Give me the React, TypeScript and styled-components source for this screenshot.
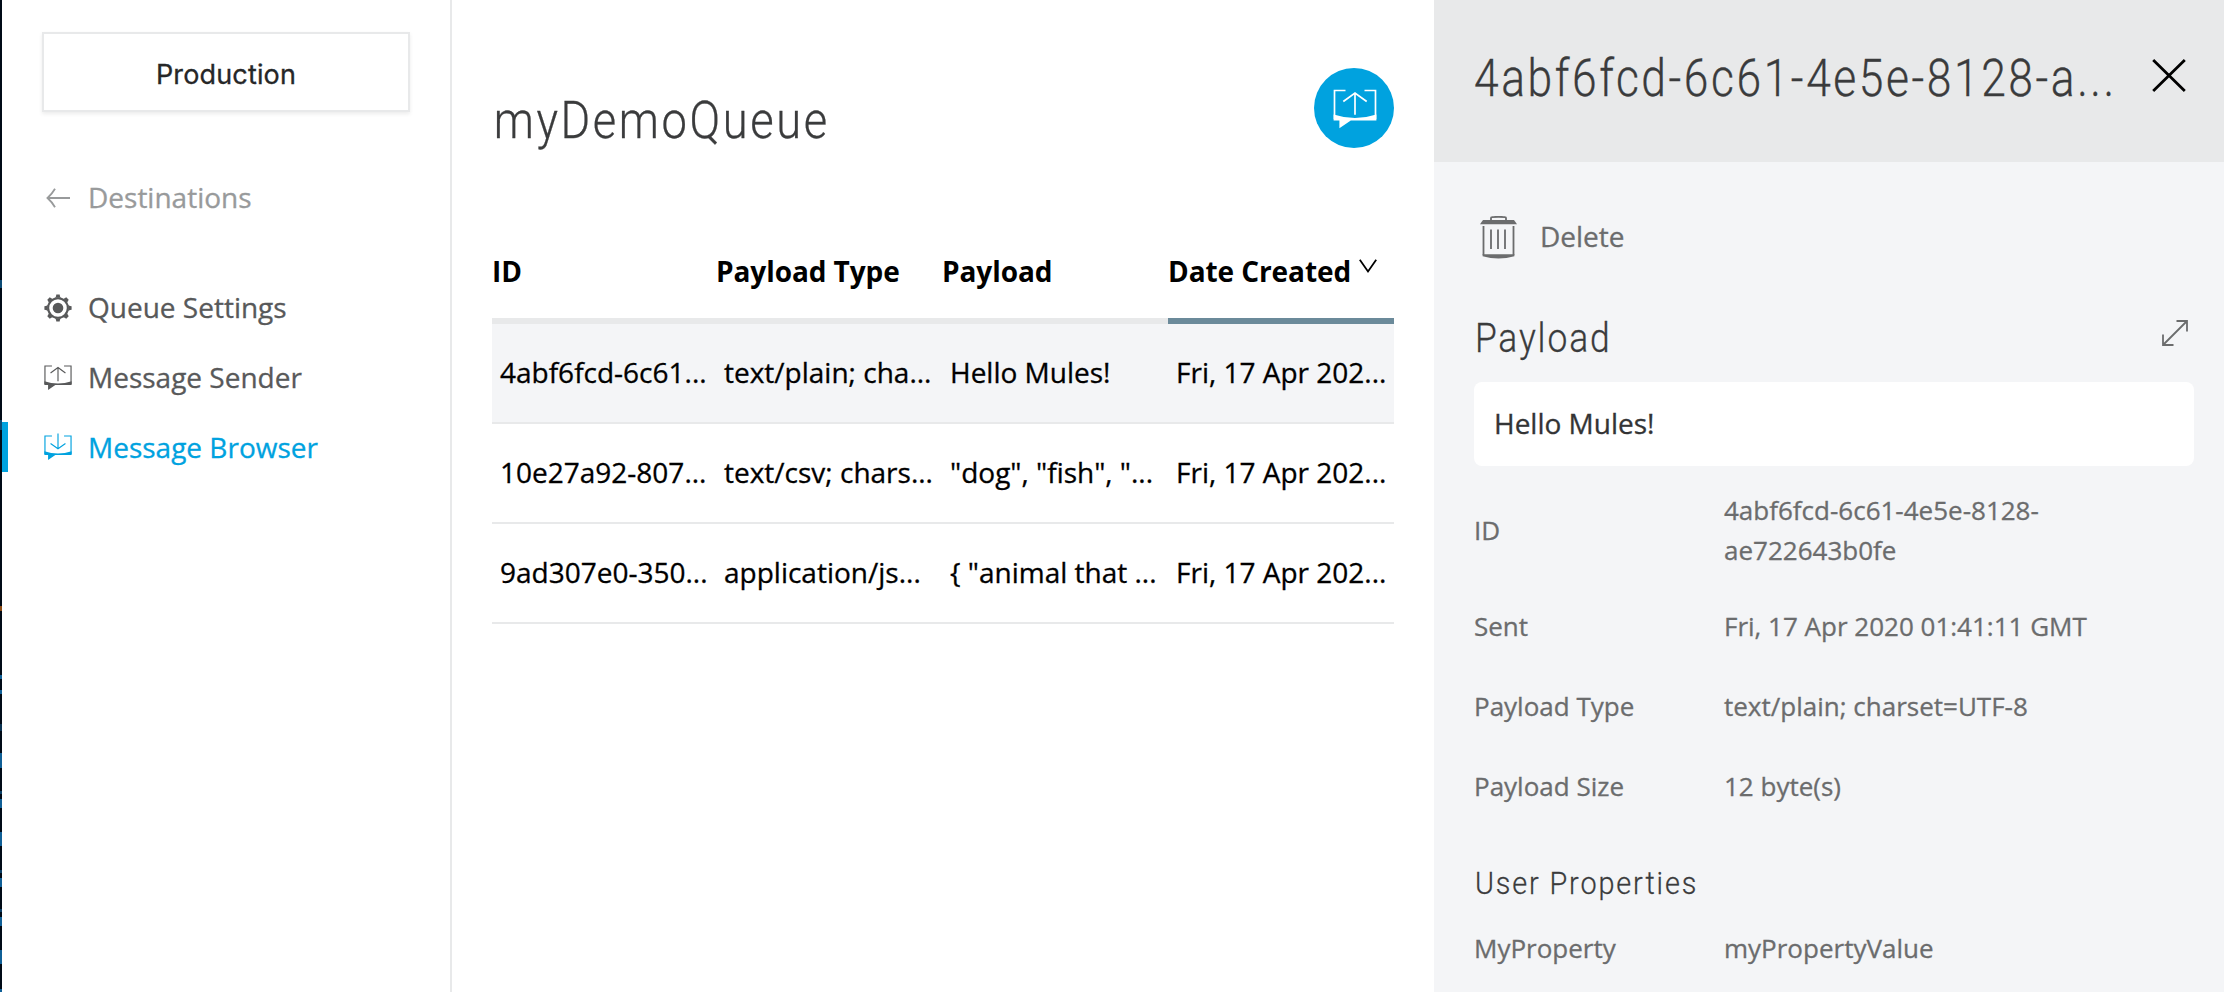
import React from "react";
import styled, { createGlobalStyle } from "styled-components";

const color = {
  blue: "#00a2df",
  line: "#e8e9ea",
  panel: "#f4f5f7",
  text: "#58595a",
  muted: "#989a9b",
  detail: "#6b6c6d",
  heading: "#3a3b3c",
};

const body = `"Open Sans", "Noto Sans", sans-serif`;
const display = `Roboto, "Open Sans", sans-serif`;

const GlobalStyle = createGlobalStyle`
  * { box-sizing: border-box; }
  body {
    margin: 0;
    background: #fff;
    font-family: ${body};
    overflow: hidden;
    -webkit-text-stroke: 0.3px currentColor;
  }
  h1, h2, h3, p, dl, dd, dt { margin: 0; font-weight: inherit; }
  button { font: inherit; border: 0; background: none; padding: 0; color: inherit; }
`;

const Page = styled.div`
  display: flex;
  width: 2224px;
  height: 992px;
  overflow: hidden;
`;

const edgeMarks: [number, number, string][] = [
  [280, 8, "#0b4a75"],
  [420, 10, "#0b4a75"],
  [606, 5, "#8a4a14"],
  [675, 4, "#0f5f96"],
  [690, 4, "#0f5f96"],
  [724, 7, "#0a3352"],
  [753, 15, "#0f5f96"],
  [791, 3, "#0a3f66"],
  [799, 9, "#0f5f96"],
  [832, 14, "#0f5f96"],
  [870, 3, "#0a3f66"],
  [878, 9, "#0f5f96"],
  [909, 3, "#0a3f66"],
  [917, 9, "#0f5f96"],
  [950, 14, "#0f5f96"],
  [989, 3, "#0f5f96"],
];

const edgeStops = edgeMarks
  .map(([y, h, c]) => `#000a16 ${y}px, ${c} ${y}px, ${c} ${y + h}px, #000a16 ${y + h}px`)
  .join(", ");

const Edge = styled.div`
  flex: 0 0 2px;
  background: linear-gradient(to bottom, ${edgeStops});
`;

const Sidebar = styled.aside`
  flex: 0 0 450px;
  border-right: 2px solid ${color.line};
  padding-top: 32px;
`;

const Environment = styled.button`
  display: flex;
  align-items: center;
  justify-content: center;
  width: 368px;
  height: 80px;
  margin: 0 0 60px 40px;
  background: #fff;
  border: 2px solid ${color.line};
  box-shadow: 0 2px 4px rgba(0, 0, 0, 0.08);
  font-family: Inter, "Liberation Sans", sans-serif;
  font-size: 27px;
  letter-spacing: 0.15px;
  color: #262728;
  padding-top: 5px;
`;

const Nav = styled.nav`
  display: flex;
  flex-direction: column;
  gap: 20px;
`;

const NavItem = styled.a<{ $tone?: "muted" | "active" }>`
  display: flex;
  align-items: center;
  gap: 15px;
  height: 50px;
  padding-left: ${(p) => (p.$tone === "active" ? 35 : 41)}px;
  border-left: ${(p) => (p.$tone === "active" ? `6px solid ${color.blue}` : "0")};
  margin-bottom: ${(p) => (p.$tone === "muted" ? 40 : 0)}px;
  font-size: 28px;
  line-height: 50px;
  color: ${(p) =>
    p.$tone === "active" ? color.blue : p.$tone === "muted" ? color.muted : color.text};
`;

const NavIcon = styled.span`
  display: flex;
  align-items: center;
  justify-content: center;
  width: 30px;
  height: 30px;
  padding-top: 1px;
`;

const Main = styled.main`
  flex: 1;
  padding: 68px 40px 0;
`;

const MainHeader = styled.header`
  display: flex;
  justify-content: space-between;
  align-items: flex-start;
  height: 156px;
`;

const QueueTitle = styled.h1`
  padding: 23px 0 0 2px;
  font-family: ${display};
  font-weight: 300;
  font-size: 52px;
  line-height: 60px;
  letter-spacing: 3px;
  transform: scaleX(0.87);
  transform-origin: left;
  color: ${color.heading};
`;

const SendButton = styled.button`
  display: flex;
  justify-content: center;
  padding: 21px 0 0 2px;
  width: 80px;
  height: 80px;
  border-radius: 50%;
  background: ${color.blue};
  color: #fff;
`;

const Table = styled.div`
  display: grid;
  width: 902px;
`;

const Row = styled.div<{ $selected?: boolean }>`
  display: grid;
  grid-template-columns: 224px 226px 226px 226px;
  height: 100px;
  border-bottom: 2px solid ${color.line};
  background: ${(p) => (p.$selected ? color.panel : "#fff")};
`;

const HeadRow = styled(Row)`
  border-bottom: 0;
`;

const HeadCell = styled.div<{ $sorted?: boolean }>`
  display: flex;
  gap: 8px;
  padding-top: 27px;
  border-bottom: 6px solid ${(p) => (p.$sorted ? "#6b8a9a" : color.line)};
  font-weight: 700;
  font-size: 28px;
  line-height: 40px;
  letter-spacing: -0.08px;
  -webkit-text-stroke: 0;
  white-space: nowrap;
  color: #000;
`;

const Cell = styled.div`
  padding: 0 4px 0 8px;
  overflow: hidden;
  text-overflow: ellipsis;
  white-space: nowrap;
  font-size: 28px;
  line-height: 97px;
  color: #000;
`;

const SortIcon = styled.svg`
  margin-top: 8px;
`;

const Panel = styled.aside`
  flex: 0 0 790px;
  background: ${color.panel};
`;

const PanelHeader = styled.header`
  display: flex;
  justify-content: space-between;
  align-items: flex-start;
  height: 162px;
  padding: 49px 38px 0 40px;
  background: ${color.line};
`;

const PanelTitle = styled.h2`
  width: 645px;
  font-family: ${display};
  font-weight: 300;
  font-size: 51px;
  line-height: 60px;
  letter-spacing: 2.95px;
  transform: scaleX(0.87);
  transform-origin: left;
  white-space: nowrap;
  color: ${color.heading};
`;

const CloseButton = styled.button`
  display: flex;
  padding-top: 10px;
  color: #000;
`;

const PanelBody = styled.div`
  padding: 0 30px 0 40px;
`;

const DeleteButton = styled.button`
  display: flex;
  align-items: flex-start;
  gap: 23px;
  height: 152px;
  padding: 54px 0 0 6px;
  font-size: 28px;
  line-height: 41px;
  color: ${color.detail};
`;

const SectionHeader = styled.div`
  display: flex;
  justify-content: space-between;
  height: 68px;
  padding-right: 6px;
`;

const SectionTitle = styled.h3<{ $small?: boolean }>`
  padding-left: 1px;
  font-family: ${display};
  font-weight: 300;
  font-size: ${(p) => (p.$small ? 32 : 40)}px;
  line-height: 48px;
  letter-spacing: 2.1px;
  margin-top: ${(p) => (p.$small ? 33 : 1)}px;
  transform: scaleX(${(p) => (p.$small ? 0.9 : 0.885)});
  transform-origin: left;
  color: ${color.heading};
`;

const ExpandButton = styled.button`
  align-self: flex-start;
  display: flex;
  padding-top: 6px;
  color: ${color.detail};
`;

const PayloadBox = styled.pre`
  margin: 0 0 8px;
  height: 84px;
  padding-left: 20px;
  border-radius: 8px;
  background: #fff;
  font-family: ${body};
  font-size: 28px;
  line-height: 83px;
  color: #333435;
`;

const Detail = styled.dl<{ $tall?: boolean }>`
  display: grid;
  grid-template-columns: 250px 380px;
  align-items: center;
  height: ${(p) => (p.$tall ? 112 : 80)}px;
  font-size: 26px;
  line-height: 40px;
  color: ${color.detail};
`;

const PropertyList = styled.div`
  margin-top: 1px;
`;

function MessageIcon({ width, down, weight = 1.8 }: { width: number; down?: boolean; weight?: number }) {
  return (
    <svg width={width} height={(width * 40) / 44} viewBox="0 0 44 40" fill="none" stroke="currentColor" strokeWidth={weight} overflow="visible">
      <path d="M12.5 1.5H1.5V30M31.5 1.5H42.5V30" />
      <path
        d="M.6 25.5Q22 32.5 43.4 25.5V31.4H17.8L6.4 39.2V31.4H.6Z"
        fill="currentColor"
        stroke="none"
      />
      {down ? <path d="M22-2.5V21M10.3 13.5 22 21.6 33.7 13.5" /> : <path d="M22 4V25.7M10.3 12.5 22 4 33.7 12.5" />}
    </svg>
  );
}

function GearIcon() {
  const teeth = [0, 45, 90, 135, 180, 225, 270, 315];
  return (
    <svg width="28" height="28" viewBox="-14 -14 28 28" fill="currentColor">
      <circle r="9.8" fill="none" stroke="currentColor" strokeWidth="2" />
      <circle r="5.3" />
      {teeth.map((a) => (
        <path
          key={a}
          transform={`rotate(${a})`}
          d={a % 90 === 0 ? "M-3.4-10.2C-2-11-2-11.5-1.7-13.6H1.7C2-11.5 2-11 3.4-10.2Z" : "M-2.6-10.2-1.7-13.4H1.7L2.6-10.2Z"}
        />
      ))}
    </svg>
  );
}

function BackIcon() {
  return (
    <svg width="24" height="20" viewBox="0 0 24 20" fill="none" stroke="currentColor" strokeWidth="1.8">
      <path d="M24 10H1.5M9 .8Q6 6 1.5 10 6 14 9 19.2" />
    </svg>
  );
}

function TrashIcon() {
  return (
    <svg width="37" height="43" viewBox="0 0 37 43" fill="none" stroke="currentColor" strokeWidth="1.8">
      <path d="M11 4.5V2Q11 1.3 12 1.2 18.5.4 25 1.2 26 1.3 26 2V4.5" />
      <path d="M3 4H34L37 8.2H0Z" fill="currentColor" stroke="none" />
      <path d="M3.5 10V39M33.5 10V39" />
      <path d="M2.6 38.3H34.4V40.2Q18.5 44.8 2.6 40.2Z" fill="currentColor" stroke="none" />
      <path d="M11 13.5V33M18 13.5V33M25 13.5V33" />
    </svg>
  );
}

const messages = [
  ["4abf6fcd-6c61...", "text/plain; cha...", "Hello Mules!", "Fri, 17 Apr 202..."],
  ["10e27a92-807...", "text/csv; chars...", '"dog", "fish", "...', "Fri, 17 Apr 202..."],
  ["9ad307e0-350...", "application/js...", '{ "animal that ...', "Fri, 17 Apr 202..."],
];

const details = [
  ["ID", "4abf6fcd-6c61-4e5e-8128-ae722643b0fe"],
  ["Sent", "Fri, 17 Apr 2020 01:41:11 GMT"],
  ["Payload Type", "text/plain; charset=UTF-8"],
  ["Payload Size", "12 byte(s)"],
];

export default function App() {
  return (
    <Page>
      <GlobalStyle />
      <Edge />
      <Sidebar>
        <Environment>Production</Environment>
        <Nav>
          <NavItem $tone="muted">
            <NavIcon><BackIcon /></NavIcon>
            Destinations
          </NavItem>
          <NavItem>
            <NavIcon><GearIcon /></NavIcon>
            Queue Settings
          </NavItem>
          <NavItem>
            <NavIcon><MessageIcon width={28} /></NavIcon>
            Message Sender
          </NavItem>
          <NavItem $tone="active">
            <NavIcon><MessageIcon width={28} down /></NavIcon>
            Message Browser
          </NavItem>
        </Nav>
      </Sidebar>
      <Main>
        <MainHeader>
          <QueueTitle>myDemoQueue</QueueTitle>
          <SendButton aria-label="Send message"><MessageIcon width={44} weight={1.7} /></SendButton>
        </MainHeader>
        <Table>
          <HeadRow>
            <HeadCell>ID</HeadCell>
            <HeadCell>Payload Type</HeadCell>
            <HeadCell>Payload</HeadCell>
            <HeadCell $sorted>
              Date Created
              <SortIcon width="18" height="14" viewBox="0 0 18 14" fill="none" stroke="currentColor" strokeWidth="1.8">
                <path d="M.8.8 9 12.4 17.2.8" />
              </SortIcon>
            </HeadCell>
          </HeadRow>
          {messages.map((cells, i) => (
            <Row key={cells[0]} $selected={i === 0}>
              {cells.map((c) => <Cell key={c}>{c}</Cell>)}
            </Row>
          ))}
        </Table>
      </Main>
      <Panel>
        <PanelHeader>
          <PanelTitle>4abf6fcd-6c61-4e5e-8128-a...</PanelTitle>
          <CloseButton aria-label="Close">
            <svg width="34" height="33" viewBox="0 0 34 33" fill="none" stroke="currentColor" strokeWidth="2.8">
              <path d="M1.2 1 32.8 32M32.8 1 1.2 32" />
            </svg>
          </CloseButton>
        </PanelHeader>
        <PanelBody>
          <DeleteButton><TrashIcon />Delete</DeleteButton>
          <SectionHeader>
            <SectionTitle>Payload</SectionTitle>
            <ExpandButton aria-label="Expand">
              <svg width="26" height="26" viewBox="0 0 26 26" fill="none" stroke="currentColor" strokeWidth="1.8">
                <path d="M14.5 1H25V11.5M25 1 1 25M1 14.5V25H11.5" />
              </svg>
            </ExpandButton>
          </SectionHeader>
          <PayloadBox>Hello Mules!</PayloadBox>
          {details.map(([k, v], i) => (
            <Detail key={k} $tall={i === 0}>
              <dt>{k}</dt>
              <dd>{v}</dd>
            </Detail>
          ))}
          <SectionTitle $small>User Properties</SectionTitle>
          <PropertyList>
            <Detail>
              <dt>MyProperty</dt>
              <dd>myPropertyValue</dd>
            </Detail>
          </PropertyList>
        </PanelBody>
      </Panel>
    </Page>
  );
}
